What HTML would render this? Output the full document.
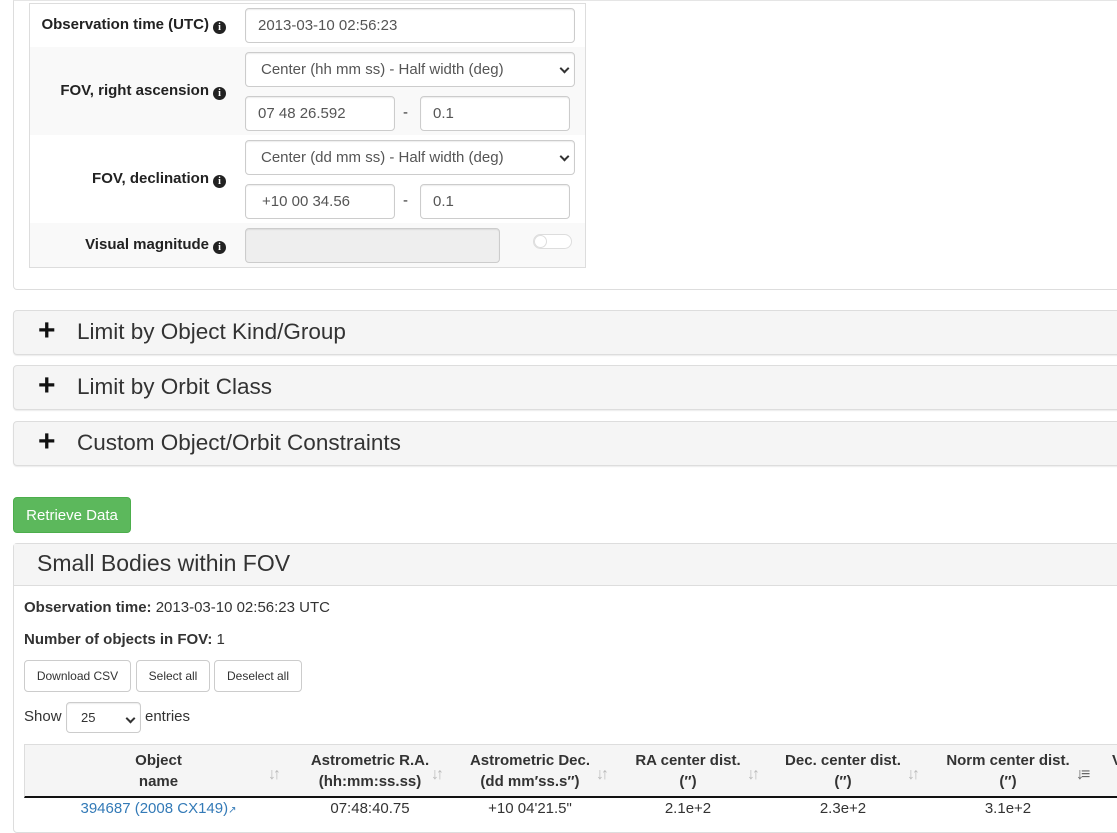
<!DOCTYPE html>
<html><head><meta charset="utf-8"><style>
*{box-sizing:border-box}
body{margin:0;width:1117px;height:819px;overflow:hidden;background:#fff;font-family:"Liberation Sans",Arial,sans-serif;color:#333;position:relative}
.a{position:absolute}
.inp{position:absolute;border:1px solid #ccc;border-radius:4px;background:#fff;font-size:15px;color:#555;padding:0 12px;display:flex;align-items:center;box-shadow:inset 0 1px 1px rgba(0,0,0,.075)}
.sel::after{content:"";position:absolute;right:6px;top:12px;width:5px;height:5px;border-right:2px solid #333;border-bottom:2px solid #333;transform:rotate(45deg)}
.lbl{position:absolute;font-weight:bold;font-size:15px;color:#222;right:0}
.ic{display:inline-block;width:13px;height:13px;border-radius:50%;background:#222;color:#fff;font-size:10px;line-height:13px;text-align:center;font-family:"Liberation Serif",serif;font-weight:bold;vertical-align:-1px;margin-left:4px}
.acc{position:absolute;left:13px;width:1110px;background:#f5f5f5;border:1px solid #ddd;border-radius:4px;box-shadow:0 1px 1px rgba(0,0,0,.08);font-size:22.5px;color:#333}
.acc .p{position:absolute;left:24px;top:5px;font-weight:bold;font-size:30px;line-height:30px;color:#111}
.acc .t{position:absolute;left:63px;top:8px}
.btn{position:absolute;border:1px solid #ccc;border-radius:4px;background:#fff;font-size:12px;color:#333;display:flex;align-items:center;justify-content:center}
.th{position:absolute;top:750px;font-weight:bold;font-size:15px;text-align:center;line-height:21px;color:#333}
.so{position:absolute;top:766px;color:#bbb;font-size:16px;font-weight:bold;letter-spacing:-3px}
.td{position:absolute;top:800px;font-size:15px;text-align:center}
</style></head><body>
<div class="a" style="left:13px;top:0;width:1110px;height:290px;border:1px solid #ddd;border-top-color:#e5e5e5;border-radius:0 0 0 4px"></div>
<div class="a" style="left:29px;top:3px;width:557px;height:265px;border:1px solid #ddd"></div>
<div class="a" style="left:30px;top:47px;width:555px;height:88px;background:#f9f9f9"></div>
<div class="a" style="left:30px;top:223px;width:555px;height:44px;background:#f9f9f9"></div>
<div class="a" style="left:30px;top:0;width:196px;height:270px">
<div class="lbl" style="top:16px">Observation time (UTC)<span class="ic">i</span></div>
<div class="lbl" style="top:82px">FOV, right ascension<span class="ic">i</span></div>
<div class="lbl" style="top:170px">FOV, declination<span class="ic">i</span></div>
<div class="lbl" style="top:236px">Visual magnitude<span class="ic">i</span></div>
</div>
<div class="inp" style="left:245px;top:8px;width:330px;height:35px">2013-03-10 02:56:23</div>
<div class="inp sel" style="left:245px;top:52px;width:330px;height:35px;padding-left:15px">Center (hh mm ss) - Half width (deg)</div>
<div class="inp" style="left:245px;top:96px;width:150px;height:35px">07 48 26.592</div>
<div class="a" style="left:403px;top:104px;font-size:15px">-</div>
<div class="inp" style="left:420px;top:96px;width:150px;height:35px">0.1</div>
<div class="inp sel" style="left:245px;top:140px;width:330px;height:35px;padding-left:15px">Center (dd mm ss) - Half width (deg)</div>
<div class="inp" style="left:245px;top:184px;width:150px;height:35px;padding-left:16px">+10 00 34.56</div>
<div class="a" style="left:403px;top:192px;font-size:15px">-</div>
<div class="inp" style="left:420px;top:184px;width:150px;height:35px">0.1</div>
<div class="inp" style="left:245px;top:228px;width:255px;height:35px;background:#eee"></div>
<div class="a" style="left:533px;top:234px;width:39px;height:15px;border:1px solid #ddd;border-radius:8px;background:#fff"><div class="a" style="left:0;top:0;width:13px;height:13px;border-radius:50%;border:1px solid #ddd;background:#fff"></div></div>

<div class="acc" style="top:310px;height:45px"><span class="p">+</span><span class="t">Limit by Object Kind/Group</span></div>
<div class="acc" style="top:365px;height:45px"><span class="p">+</span><span class="t">Limit by Orbit Class</span></div>
<div class="acc" style="top:421px;height:45px"><span class="p">+</span><span class="t">Custom Object/Orbit Constraints</span></div>

<div class="a" style="left:13px;top:497px;width:118px;height:36px;background:#5cb85c;border:1px solid #4cae4c;border-radius:4px;color:#fff;font-size:15px;display:flex;align-items:center;justify-content:center">Retrieve Data</div>

<div class="a" style="left:13px;top:543px;width:1110px;height:290px;border:1px solid #ddd;border-radius:4px"></div>
<div class="a" style="left:14px;top:544px;width:1110px;height:42px;background:#f5f5f5;border-bottom:1px solid #ddd"></div>
<div class="a" style="left:37px;top:550px;font-size:23px;color:#333">Small Bodies within FOV</div>
<div class="a" style="left:24px;top:599px;font-size:15px"><b>Observation time:</b> 2013-03-10 02:56:23 UTC</div>
<div class="a" style="left:24px;top:631px;font-size:15px"><b>Number of objects in FOV:</b> 1</div>
<div class="btn" style="left:24px;top:660px;width:107px;height:32px">Download CSV</div>
<div class="btn" style="left:136px;top:660px;width:74px;height:32px">Select all</div>
<div class="btn" style="left:214px;top:660px;width:88px;height:32px">Deselect all</div>
<div class="a" style="left:24px;top:708px;font-size:15px">Show</div>
<div class="inp sel" style="left:66px;top:702px;width:75px;height:31px;font-size:13px;color:#333;padding-left:14px">25</div>
<div class="a" style="left:145px;top:708px;font-size:15px">entries</div>

<div class="a" style="left:24px;top:744px;width:1100px;height:54px;background:#f5f5f5;border:1px solid #ddd;border-bottom:2px solid #111"></div>
<div class="th" style="left:24px;width:269px">Object<br>name</div>
<div class="th" style="left:293px;width:154px">Astrometric R.A.<br>(hh:mm:ss.ss)</div>
<div class="th" style="left:455px;width:150px">Astrometric Dec.<br>(dd mm′ss.s″)</div>
<div class="th" style="left:620px;width:136px">RA center dist.<br>(″)</div>
<div class="th" style="left:771px;width:144px">Dec. center dist.<br>(″)</div>
<div class="th" style="left:931px;width:154px">Norm center dist.<br>(″)</div>
<div class="th" style="left:1112px;width:20px;text-align:left">V</div>
<div class="so" style="left:268px">↓↑</div>
<div class="so" style="left:431px">↓↑</div>
<div class="so" style="left:596px">↓↑</div>
<div class="so" style="left:747px">↓↑</div>
<div class="so" style="left:907px">↓↑</div>
<div class="so" style="left:1076px;color:#666">↓≡</div>
<div class="td" style="left:24px;width:269px;color:#337ab7">394687 (2008 CX149)<span style="font-size:10px">↗</span></div>
<div class="td" style="left:293px;width:154px">07:48:40.75</div>
<div class="td" style="left:455px;width:150px">+10 04'21.5"</div>
<div class="td" style="left:620px;width:136px">2.1e+2</div>
<div class="td" style="left:771px;width:144px">2.3e+2</div>
<div class="td" style="left:931px;width:154px">3.1e+2</div>
</body></html>
